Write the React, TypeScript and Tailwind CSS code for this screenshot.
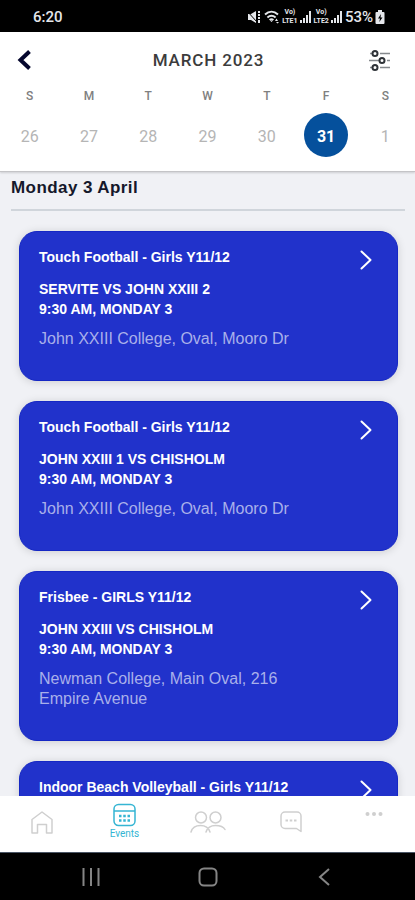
import React from 'react';

const week = [
  { day: 'S', date: 26 },
  { day: 'M', date: 27 },
  { day: 'T', date: 28 },
  { day: 'W', date: 29 },
  { day: 'T', date: 30 },
  { day: 'F', date: 31, selected: true },
  { day: 'S', date: 1 },
];

const events = [
  {
    id: 1,
    title: 'Touch Football - Girls Y11/12',
    teams: 'SERVITE VS JOHN XXIII 2',
    time: '9:30 AM, MONDAY 3',
    place: 'John XXIII College, Oval, Mooro Dr',
  },
  {
    id: 2,
    title: 'Touch Football - Girls Y11/12',
    teams: 'JOHN XXIII 1 VS CHISHOLM',
    time: '9:30 AM, MONDAY 3',
    place: 'John XXIII College, Oval, Mooro Dr',
  },
  {
    id: 3,
    title: 'Frisbee - GIRLS Y11/12',
    teams: 'JOHN XXIII VS CHISHOLM',
    time: '9:30 AM, MONDAY 3',
    place: 'Newman College, Main Oval, 216 Empire Avenue',
  },
  {
    id: 4,
    title: 'Indoor Beach Volleyball - Girls Y11/12',
    teams: '',
    time: '',
    place: '',
  },
];

function Signal() {
  return (
    <svg width="12" height="12" viewBox="0 0 12 12" fill="currentColor">
      <path d="M0 9h2v3H0zM3 7h2v5H3zM6 4h2v8H6zM9 0h2v12H9z" />
    </svg>
  );
}

function Volte({ line }: { line: number }) {
  return (
    <span className="flex flex-col items-center text-[7px] leading-[9px] font-bold">
      <span>Vo)</span>
      <span>LTE{line}</span>
    </span>
  );
}

function StatusBar() {
  return (
    <div className="h-8 shrink-0 bg-black text-gray-200 pl-[33px] pr-[30px] pt-[2px] flex items-center justify-between">
      <span className="text-[15px] font-medium">6:20</span>
      <div className="flex items-center gap-[2px]">
        {/* Vibrate / mute */}
        <svg width="15" height="14" viewBox="0 0 15 14" fill="currentColor">
          <path d="M1 4h3l5-3v12l-5-3H1z" />
          <path d="M0 1l10 11" stroke="#000" strokeWidth="1" />
          <path d="M11 1h2v2h-2zM11 4h2v2h-2zM11 7h2v2h-2zM11 10h2v3h-2z" />
        </svg>
        {/* Wifi */}
        <svg width="16" height="14" viewBox="0 0 16 14" fill="none" stroke="currentColor" strokeWidth="2">
          <path d="M1 4.500c4-3.600 9-3.600 13 0M3.400 7.400c2.600-2.200 5.600-2.200 8.200 0M5.600 10c1.200-1 2.600-1 3.800 0" />
          <path d="M6 10.500h3L7.500 12zM11 11l1.500-2.500L14 11zM12 12h3l-1.500 1.500z" fill="currentColor" stroke="none" />
        </svg>
        <Volte line={1} />
        <Signal />
        <Volte line={2} />
        <Signal />
        <span className="text-[15px] font-medium">53%</span>
        {/* Battery with charging bolt */}
        <svg width="10" height="14" viewBox="0 0 10 14" fill="currentColor">
          <path d="M3 0h4v2h1.500a1 1 0 0 1 1 1v10a1 1 0 0 1-1 1h-7a1 1 0 0 1-1-1V3a1 1 0 0 1 1-1H3z" />
          <path d="M6 4L3 8.500h2L4.300 12 7.500 7.500h-2z" fill="#000" />
        </svg>
      </div>
    </div>
  );
}

function EventCard({ event }: { event: (typeof events)[number] }) {
  return (
    <article className="rounded-[18px] bg-[#2132cb] border border-[#1527c4] px-[19px] pt-[15px] pb-[31px] text-white shadow-[0_1px_8px_rgba(0,0,0,0.15)] font-['Liberation_Sans',Arial,sans-serif]">
      <div className="flex items-start justify-between">
        <h3 className="text-[14px] leading-5 font-bold">{event.title}</h3>
        <button aria-label="Open event" className="mt-[3px] mr-[6px]">
          <svg width="12" height="20" viewBox="0 0 12 20" fill="none" stroke="currentColor" strokeWidth="2" strokeLinecap="round" strokeLinejoin="round">
            <path d="M1.500 1.500L10.500 10l-9 8.500" />
          </svg>
        </button>
      </div>
      <div className="mt-[9px] min-h-10 text-[14px] leading-5 font-bold">
        <p>{event.teams}</p>
        <p>{event.time}</p>
      </div>
      <p className="mt-[10px] max-w-[270px] min-h-5 text-[16px] leading-5 text-[#a9b0ea]">{event.place}</p>
    </article>
  );
}

function App() {
  return (
    <div className="flex flex-col h-screen overflow-hidden bg-[#f0f1f5] font-[Roboto,sans-serif]">
      <StatusBar />

      {/* Calendar strip */}
      <header className="relative z-10 shrink-0 bg-white border-b border-[#c4c4c7] shadow-[0_1px_2px_rgba(0,0,0,0.15)] pb-[14px]">
        <div className="flex items-center justify-between pl-[17px] pr-6 h-14">
          <button aria-label="Back" className="w-[31px]">
            <svg width="14" height="20" viewBox="0 0 14 20" fill="none" stroke="#05072e" strokeWidth="4">
              <path d="M12.500 1.500L3.500 10l9 8.500" />
            </svg>
          </button>
          <h1 className="text-[17px] leading-5 font-medium tracking-wider text-[#3c3c3c]">MARCH 2023</h1>
          <button aria-label="Filter">
            <svg width="22" height="22" viewBox="0 0 22 22" fill="none" stroke="#2f3338" strokeWidth="2">
              <path d="M1 4.500h3M11 4.500h10M0 11.500h10M18 11.500h3M1 18.500h3M11 18.500h10" strokeWidth="1.500" stroke="#85898d" />
              <circle cx="6" cy="4.500" r="2.500" />
              <circle cx="13" cy="11.500" r="2.500" />
              <circle cx="6" cy="18.500" r="2.500" />
            </svg>
          </button>
        </div>
        <div className="grid grid-cols-7">
          {week.map((item, i) => (
            <div key={i} className="flex flex-col items-center">
              <span className="text-[12px] leading-4 font-medium text-[#808080]">{item.day}</span>
              <button
                className={
                  item.selected
                    ? 'mt-[9px] size-11 pt-1 rounded-full bg-[#05509c] text-white text-[16px] font-bold'
                    : 'mt-[9px] size-11 pt-1 rounded-full text-[#b5b5b5] text-[16px]'
                }
              >
                {item.date}
              </button>
            </div>
          ))}
        </div>
      </header>

      {/* Event list */}
      <main className="flex-1 min-h-0 overflow-hidden">
        <div className="ml-[11px] mr-[10px] pt-[5px] pb-[10px] border-b-2 border-[#d0d5db]">
          <h2 className="text-[17px] leading-[22px] font-bold tracking-wide text-[#15182b] font-['Liberation_Sans',Arial,sans-serif]">
            Monday 3 April
          </h2>
        </div>
        <div className="flex flex-col gap-5 pl-[19px] pr-[17px] pt-[20px]">
          {events.map((event) => (
            <EventCard key={event.id} event={event} />
          ))}
        </div>
      </main>

      {/* Tab bar */}
      <nav className="relative z-10 shrink-0 h-14 bg-white grid grid-cols-5 text-[#cfcfcf]">
        <a href="#home" aria-label="Home" className="flex justify-center pt-[15px]">
          <svg width="22" height="23" viewBox="0 0 22 23" fill="none" stroke="currentColor" strokeWidth="1.500" strokeLinejoin="round">
            <path d="M1 8.500L11 1l10 7.500V22h-5.500v-8.500h-9V22H1z" />
          </svg>
        </a>
        <a href="#events" className="flex flex-col items-center pt-[7px] text-[#35b5d3]">
          <svg width="23" height="24" viewBox="0 0 23 24" fill="none" stroke="currentColor" strokeWidth="1.500">
            <rect x="1" y="1.500" width="21" height="21" rx="4.500" />
            <path d="M1 8h21" />
            <path d="M6 13h2.500M10.250 13h2.500M14.500 13H17M6 17.500h2.500M10.250 17.500h2.500M14.500 17.500H17" strokeWidth="2.500" />
          </svg>
          <span className="text-[10px] leading-[14px]">Events</span>
        </a>
        <a href="#people" aria-label="People" className="flex justify-center pt-[15px]">
          <svg width="36" height="22" viewBox="0 0 36 22" fill="none" stroke="currentColor" strokeWidth="1.500" strokeLinecap="round">
            <circle cx="11" cy="6.500" r="5.500" />
            <circle cx="25.500" cy="6.500" r="5.500" />
            <path d="M1 21c1.300-4.500 5-6.500 9.500-6.500s8 2 9.500 6.500M16 21c1.500-4.500 5-6.500 9.500-6.500 4.300 0 7.800 1 9.500 4" />
          </svg>
        </a>
        <a href="#messages" aria-label="Messages" className="flex justify-center pt-[15px]">
          <svg width="22" height="22" viewBox="0 0 22 22" fill="none" stroke="currentColor" strokeWidth="1.500" strokeLinejoin="round">
            <path d="M5 1h12a4 4 0 0 1 4 4v15.500L16.500 17.500H5a4 4 0 0 1-4-4V5a4 4 0 0 1 4-4z" />
            <path d="M5.500 9.500h2.500M9.750 9.500h2.500M14 9.500h2.500" strokeWidth="2" />
          </svg>
        </a>
        <a href="#more" aria-label="More" className="flex justify-center pt-[15px]">
          <svg width="18" height="6" viewBox="0 0 18 6" fill="currentColor">
            <circle cx="2.500" cy="3" r="2" />
            <circle cx="9" cy="3" r="2" />
            <circle cx="15.500" cy="3" r="2" />
          </svg>
        </a>
      </nav>

      {/* Android system buttons */}
      <div className="shrink-0 h-12 bg-black border-t border-gray-600 text-[#858585] flex items-center justify-between px-[81px]">
        <button aria-label="Recent apps" className="w-5 flex justify-center">
          <svg width="18" height="18" viewBox="0 0 18 18" fill="none" stroke="currentColor" strokeWidth="2">
            <path d="M1.500 0v18M9 0v18M16.500 0v18" />
          </svg>
        </button>
        <button aria-label="Home screen" className="w-5 flex justify-center">
          <svg width="20" height="20" viewBox="0 0 20 20" fill="none" stroke="currentColor" strokeWidth="2">
            <rect x="1.500" y="1.500" width="17" height="17" rx="4.500" />
          </svg>
        </button>
        <button aria-label="System back" className="w-5 flex justify-center">
          <svg width="12" height="18" viewBox="0 0 12 18" fill="none" stroke="currentColor" strokeWidth="2">
            <path d="M11 1L2 9l9 8" />
          </svg>
        </button>
      </div>
    </div>
  );
}

export default App;
